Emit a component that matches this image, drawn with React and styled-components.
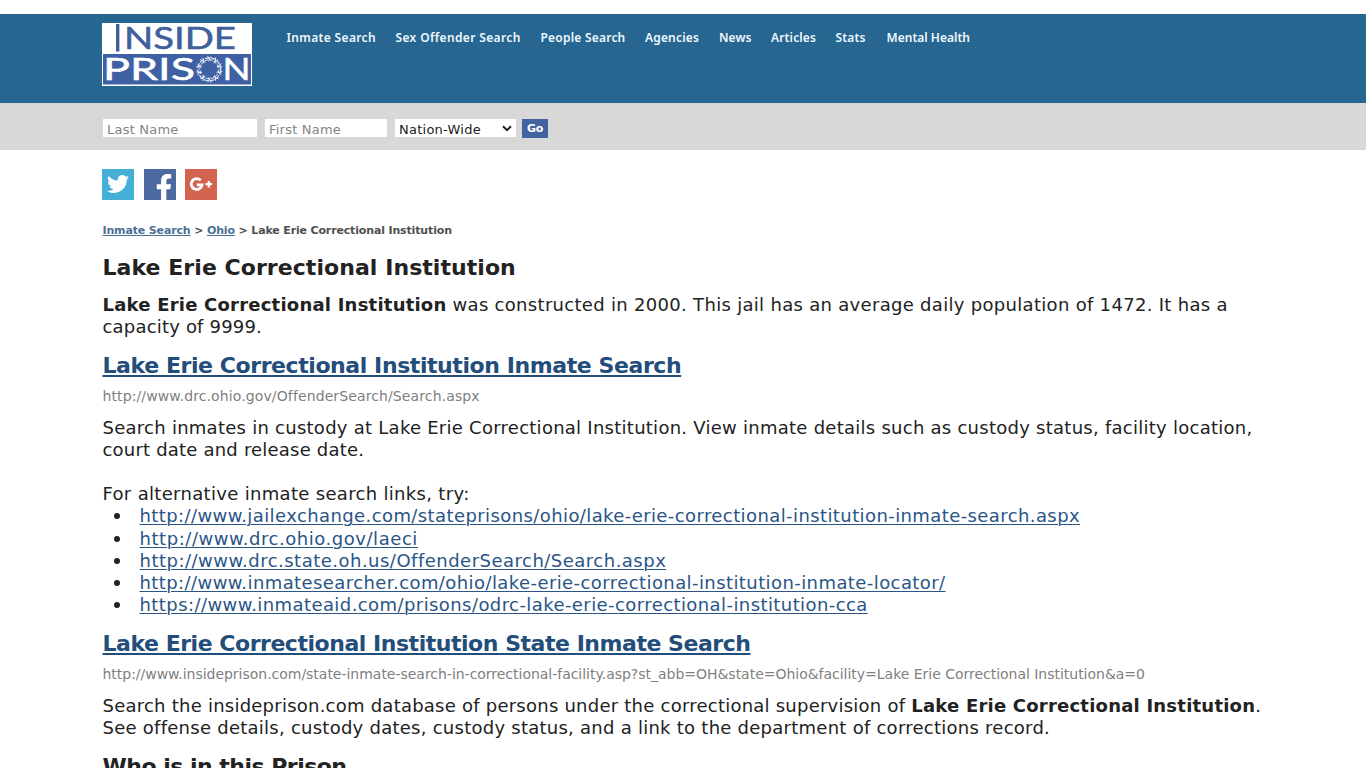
import React from "react";
import styled, { createGlobalStyle } from "styled-components";
import { FaTwitter, FaFacebookF } from "react-icons/fa";

const GlobalStyle = createGlobalStyle`
  * { box-sizing: border-box; }
  html { overflow: hidden; }
  body {
    margin: 0;
    height: 768px;
    overflow: hidden;
    background: #fff;
    color: #222;
    font-family: Verdana, "DejaVu Sans", sans-serif;
    font-size: 18px;
    line-height: 22px;
  }
`;

const Header = styled.header`
  display: flex;
  align-items: flex-start;
  margin-top: 14px;
  height: 89px;
  padding: 9px 0 0 102px;
  background: #266690;
`;

const Logo = styled.svg`
  display: block;
  flex: none;
  width: 150px;
  height: 63px;
`;

const Nav = styled.nav`
  display: flex;
  padding: 6px 0 0 34.5px;
`;

const NavLink = styled.a`
  flex: none;
  width: ${(p) => p.$width}px;
  color: #eef8ff;
  font: 600 12px/18px "Noto Sans", sans-serif;
  letter-spacing: ${(p) => p.$spacing}px;
  white-space: nowrap;
`;

const SearchBar = styled.form`
  display: flex;
  align-items: flex-start;
  height: 47px;
  padding: 16px 0 0 103px;
  background: #d8d8d8;
`;

const TextField = styled.input`
  width: ${(p) => p.$width}px;
  height: 18px;
  margin-right: 8px;
  padding: 2px 0 0 4px;
  border: 0;
  border-radius: 0;
  outline: 0;
  background: #fff;
  font: 13px/16px "DejaVu Sans", sans-serif;
  letter-spacing: 0.22px;
  &::placeholder { color: #858585; opacity: 1; }
`;

const RegionSelect = styled.div`
  display: flex;
  align-items: center;
  justify-content: space-between;
  width: 121px;
  height: 18px;
  margin-right: 6px;
  padding: 1px 4px 0;
  background: #fff;
  color: #222;
  font: 13px/17px "DejaVu Sans", sans-serif;
  letter-spacing: 0.25px;
`;

const RegionLabel = styled.span`
  padding-top: 1px;
`;

const Chevron = styled.svg`
  width: 10px;
  height: 7px;
`;

const GoButton = styled.button`
  width: 26px;
  height: 19px;
  padding: 1px 0 0;
  border: 0;
  background: #4263a0;
  color: #fff;
  font: 700 11px/18px "DejaVu Sans", sans-serif;
  letter-spacing: -0.4px;
`;

const Main = styled.main`
  padding: 19px 100px 0 102.5px;
`;

const Social = styled.div`
  display: flex;
  gap: 9.5px;
  height: 31px;
  margin-left: -0.5px;
`;

const SocialLink = styled.a`
  display: flex;
  justify-content: center;
  align-items: center;
  width: 32px;
  height: 31px;
  overflow: hidden;
  background: ${(p) => p.$color};
  color: #fff;
`;

const TwitterBird = styled(FaTwitter)`
  width: 22px;
  height: 22px;
  margin-bottom: 1px;
`;

const FacebookF = styled(FaFacebookF)`
  width: 26px;
  height: 27px;
  margin: 6px 0 0 8px;
`;

const Breadcrumb = styled.div`
  margin-top: 24px;
  color: #4f4f4f;
  font: 700 11px/14px "DejaVu Sans", sans-serif;
  letter-spacing: -0.15px;
  white-space: nowrap;
  a { color: #4a7094; text-decoration: underline; }
`;

const Title = styled.h1`
  margin: 17px 0 0;
  font: 700 22px/26px "DejaVu Sans", sans-serif;
  letter-spacing: 0.06px;
`;

const SectionTitle = styled.h2`
  margin: 15px 0 0;
  font: 700 22px/26px "DejaVu Sans", sans-serif;
  letter-spacing: ${(p) => p.$spacing}px;
  white-space: nowrap;
`;

const TitleLink = styled.a`
  color: #234d7b;
  text-decoration: underline;
  text-decoration-thickness: 2px;
  text-underline-offset: 2px;
`;

const SourceUrl = styled.div`
  margin-top: 9px;
  color: #808080;
  font: 14px/16px "DejaVu Sans", sans-serif;
  letter-spacing: ${(p) => p.$spacing}px;
  white-space: nowrap;
`;

const Paragraph = styled.div`
  margin-top: ${(p) => p.$top}px;
  font-family: "DejaVu Sans", sans-serif;
`;

const Line = styled.div`
  height: 22px;
  letter-spacing: ${(p) => p.$spacing || 0}px;
  white-space: nowrap;
`;

const Strong = styled.b`
  letter-spacing: 0.22px;
`;

const LinkList = styled.ul`
  height: 111px;
  margin: 0;
  padding: 0.3px 0 0 11.5px;
  list-style: none;
  font-family: "DejaVu Sans", sans-serif;
  line-height: 22.2px;
`;

const LinkItem = styled.li`
  display: flex;
  align-items: center;
  letter-spacing: ${(p) => p.$spacing}px;
  white-space: nowrap;
  &::before {
    content: "";
    width: 6px;
    height: 6px;
    margin-right: 19.5px;
    border-radius: 50%;
    background: #222;
  }
  a {
    color: #2a5586;
    text-decoration: underline;
    text-decoration-thickness: 1px;
    text-underline-offset: 2px;
  }
`;

const navItems = [
  ["Inmate Search", 109, 0.35],
  ["Sex Offender Search", 145, 0.36],
  ["People Search", 104.5, 0.22],
  ["Agencies", 74, 0.17],
  ["News", 52, 0.1],
  ["Articles", 64.5, 0.15],
  ["Stats", 51, 0.15],
  ["Mental Health", 90, 0.02],
];

const alternatives = [
  ["http://www.jailexchange.com/stateprisons/ohio/lake-erie-correctional-institution-inmate-search.aspx", 0.405],
  ["http://www.drc.ohio.gov/laeci", 0.55],
  ["http://www.drc.state.oh.us/OffenderSearch/Search.aspx", 0.488],
  ["http://www.inmatesearcher.com/ohio/lake-erie-correctional-institution-inmate-locator/", 0.417],
  ["https://www.inmateaid.com/prisons/odrc-lake-erie-correctional-institution-cca", 0.42],
];

const barbs = Array.from({ length: 10 }, (_, i) => i * 36);

function SiteLogo() {
  return (
    <Logo viewBox="0 0 150 63" role="img" aria-label="Inside Prison">
      <rect width="150" height="63" fill="#fff" />
      <rect x="1" y="31" width="148" height="30.500" fill="#4060a4" />
      <g fontFamily="Lato, sans-serif" fontWeight="400" strokeWidth="0.5">
        <rect x="14" y="1" width="3.400" height="27.500" fill="#40609c" />
        <g fill="#40609c" stroke="#40609c">
          <text x="22" y="26.300" fontSize="30" textLength="112" lengthAdjust="spacingAndGlyphs">NSIDE</text>
        </g>
        <g fill="#fff" stroke="#fff">
          <text x="1" y="57.300" fontSize="31" textLength="92" lengthAdjust="spacingAndGlyphs">PRIS</text>
          <text x="120.500" y="57.300" fontSize="31" textLength="28" lengthAdjust="spacingAndGlyphs">N</text>
        </g>
      </g>
      <g fill="none" stroke="#e3eaf8" transform="translate(107.300 46.300)">
        <circle r="11.500" strokeWidth="1.200" strokeDasharray="5 1.200" />
        <circle r="9.600" strokeWidth="1" strokeDasharray="3.500 1.500" />
        {barbs.map((a) => (
          <path key={a} transform={`rotate(${a})`} d="M-1.800 -13.300L1.200 -8M1.600 -13L-1 -8" strokeWidth="0.900" />
        ))}
      </g>
    </Logo>
  );
}

export default function App() {
  return (
    <>
      <GlobalStyle />
      <Header>
        <SiteLogo />
        <Nav>
          {navItems.map(([label, width, spacing]) => (
            <NavLink key={label} $width={width} $spacing={spacing}>{label}</NavLink>
          ))}
        </Nav>
      </Header>
      <SearchBar>
        <TextField $width={154} placeholder="Last Name" />
        <TextField $width={122} placeholder="First Name" />
        <RegionSelect>
          <RegionLabel>Nation-Wide</RegionLabel>
          <Chevron viewBox="0 0 10 7">
            <path d="M1 1.200L5 5.200L9 1.200" fill="none" stroke="#222" strokeWidth="2" />
          </Chevron>
        </RegionSelect>
        <GoButton type="button">Go</GoButton>
      </SearchBar>
      <Main>
        <Social>
          <SocialLink $color="#45b0d6"><TwitterBird /></SocialLink>
          <SocialLink $color="#4c69a0"><FacebookF /></SocialLink>
          <SocialLink $color="#d46250">
            <svg width="32" height="31" viewBox="0 0 32 31" fill="none" stroke="#fff">
              <path d="M15.700 11.400A5.400 5.400 0 1 0 17 15.900H11.800" strokeWidth="2.800" />
              <path d="M20.500 15.200H27M23.750 12V18.500" strokeWidth="2.200" />
            </svg>
          </SocialLink>
        </Social>
        <Breadcrumb>
          <a>Inmate Search</a> &gt; <a>Ohio</a> &gt; Lake Erie Correctional Institution
        </Breadcrumb>
        <Title>Lake Erie Correctional Institution</Title>
        <Paragraph $top={13}>
          <Line $spacing={0.305}>
            <Strong>Lake Erie Correctional Institution</Strong> was constructed in 2000. This jail has an average daily population of 1472. It has a
          </Line>
          <Line $spacing={0.187}>capacity of 9999.</Line>
        </Paragraph>
        <SectionTitle $spacing={-0.42}><TitleLink>Lake Erie Correctional Institution Inmate Search</TitleLink></SectionTitle>
        <SourceUrl $spacing={0.115}>http://www.drc.ohio.gov/OffenderSearch/Search.aspx</SourceUrl>
        <Paragraph $top={13}>
          <Line $spacing={0.26}>Search inmates in custody at Lake Erie Correctional Institution. View inmate details such as custody status, facility location,</Line>
          <Line $spacing={0.2}>court date and release date.</Line>
          <Line />
          <Line $spacing={0.32}>For alternative inmate search links, try:</Line>
        </Paragraph>
        <LinkList>
          {alternatives.map(([url, spacing]) => (
            <LinkItem key={url} $spacing={spacing}><a>{url}</a></LinkItem>
          ))}
        </LinkList>
        <SectionTitle $spacing={-0.466}><TitleLink>Lake Erie Correctional Institution State Inmate Search</TitleLink></SectionTitle>
        <SourceUrl $spacing={-0.021}>
          http://www.insideprison.com/state-inmate-search-in-correctional-facility.asp?st_abb=OH&amp;state=Ohio&amp;facility=Lake Erie Correctional Institution&amp;a=0
        </SourceUrl>
        <Paragraph $top={13}>
          <Line $spacing={0.235}>
            Search the insideprison.com database of persons under the correctional supervision of <Strong>Lake Erie Correctional Institution</Strong>.
          </Line>
          <Line $spacing={0.255}>See offense details, custody dates, custody status, and a link to the department of corrections record.</Line>
        </Paragraph>
        <SectionTitle $spacing={-0.51}>Who is in this Prison</SectionTitle>
      </Main>
    </>
  );
}
